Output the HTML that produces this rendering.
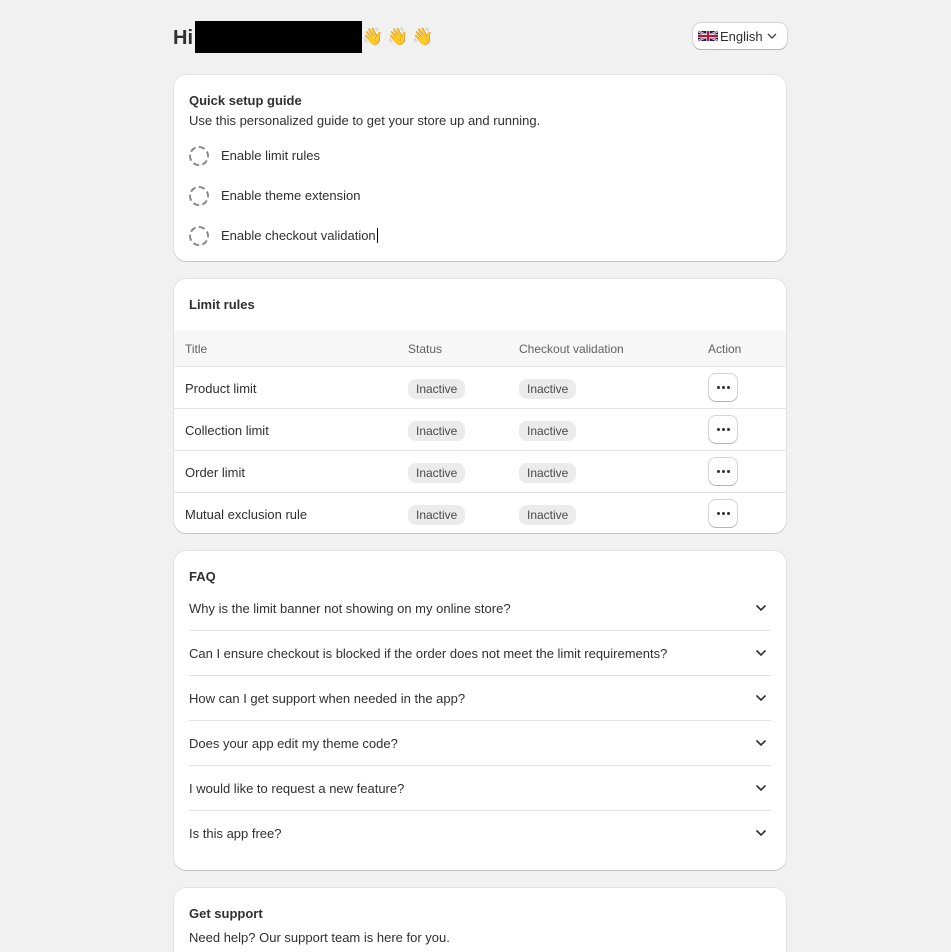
<!DOCTYPE html>
<html><head><style>
*{box-sizing:border-box;margin:0;padding:0}
html,body{width:951px;height:952px;overflow:hidden}
body{background:#f1f1f1;font-family:"Liberation Sans",sans-serif;font-size:13px;color:#303030;position:relative}
.card{position:absolute;left:174px;width:612px;background:#fff;border-radius:12px;box-shadow:0 1px 0 rgba(0,0,0,.12),0 0 0 1px rgba(0,0,0,.06)}
.b{font-weight:bold}
.abs{position:absolute}
.circ{position:absolute;left:15px;width:20px;height:20px;border:2px dashed #8a8a8a;border-radius:50%}
.row{position:absolute;left:0;right:0;height:42px;border-top:1px solid #e3e3e3}
.badge{position:absolute;top:12px;background:#ebebeb;border-radius:8px;padding:3px 8px;font-size:12px;color:#4a4a4a}
.btn{position:absolute;left:535px;top:7px;width:28px;height:27px;border-radius:7px;background:#fff;box-shadow:0 1px 0 #b5b5b5,0 0 0 1px #d4d4d4}
.btn i{position:absolute;top:12px;width:3px;height:3px;border-radius:50%;background:#303030}
.faq{position:absolute;left:15px;right:15px;height:45px;border-bottom:1px solid #e3e3e3}
.faq span{position:absolute;top:15px;left:0}
.faq svg{position:absolute;right:4px;top:18px}
</style></head><body>
<div class="abs b" style="left:173px;top:27px;font-size:20px;color:#303030">Hi</div>
<div class="abs" style="left:195px;top:21px;width:167px;height:32px;background:#000"></div>
<div class="abs" style="left:362px;top:27px;font-size:17px;letter-spacing:4px">👋👋👋</div>
<div class="abs" style="left:693px;top:23px;width:94px;height:26px;background:#fff;border-radius:8px;box-shadow:0 1px 0 #b5b5b5,0 0 0 1px #d4d4d4">
<svg class="abs" style="left:5px;top:6px" width="20" height="14" viewBox="0 0 60 30"><rect width="60" height="30" fill="#012169"/><path d="M0 0L60 30M60 0L0 30" stroke="#fff" stroke-width="6"/><path d="M0 0L60 30M60 0L0 30" stroke="#C8102E" stroke-width="2"/><path d="M30 0V30M0 15H60" stroke="#fff" stroke-width="10"/><path d="M30 0V30M0 15H60" stroke="#C8102E" stroke-width="6"/></svg>
<span class="abs" style="left:27px;top:6px;color:#303030">English</span>
<svg class="abs" style="left:74px;top:9px" width="10" height="8" viewBox="0 0 10 8"><path d="M1 2l4 4 4-4" fill="none" stroke="#4a4a4a" stroke-width="1.4"/></svg>
</div>

<div class="card" style="top:75px;height:186px">
<div class="abs b" style="left:15px;top:18px">Quick setup guide</div>
<div class="abs" style="left:15px;top:38px">Use this personalized guide to get your store up and running.</div>
<div class="circ" style="top:71px"></div><div class="abs" style="left:47px;top:73px">Enable limit rules</div>
<div class="circ" style="top:111px"></div><div class="abs" style="left:47px;top:113px">Enable theme extension</div>
<div class="circ" style="top:151px"></div><div class="abs" style="left:47px;top:153px">Enable checkout validation<span style="border-left:1.5px solid #000;margin-left:1px"></span></div>
</div>

<div class="card" style="top:279px;height:254px;overflow:hidden">
<div class="abs b" style="left:15px;top:18px">Limit rules</div>
<div class="abs" style="left:0;right:0;top:51px;height:37px;background:#f7f7f7;font-size:12px;color:#616161">
<span class="abs" style="left:11px;top:12px">Title</span><span class="abs" style="left:234px;top:12px">Status</span><span class="abs" style="left:345px;top:12px">Checkout validation</span><span class="abs" style="left:534px;top:12px">Action</span></div>
<div class="row" style="top:87px"><span class="abs" style="left:11px;top:14px">Product limit</span><span class="badge" style="left:234px">Inactive</span><span class="badge" style="left:345px">Inactive</span><div class="btn"><i style="left:8px"></i><i style="left:13px"></i><i style="left:18px"></i></div></div>
<div class="row" style="top:129px"><span class="abs" style="left:11px;top:14px">Collection limit</span><span class="badge" style="left:234px">Inactive</span><span class="badge" style="left:345px">Inactive</span><div class="btn"><i style="left:8px"></i><i style="left:13px"></i><i style="left:18px"></i></div></div>
<div class="row" style="top:171px"><span class="abs" style="left:11px;top:14px">Order limit</span><span class="badge" style="left:234px">Inactive</span><span class="badge" style="left:345px">Inactive</span><div class="btn"><i style="left:8px"></i><i style="left:13px"></i><i style="left:18px"></i></div></div>
<div class="row" style="top:213px"><span class="abs" style="left:11px;top:14px">Mutual exclusion rule</span><span class="badge" style="left:234px">Inactive</span><span class="badge" style="left:345px">Inactive</span><div class="btn"><i style="left:8px"></i><i style="left:13px"></i><i style="left:18px"></i></div></div>
</div>

<div class="card" style="top:551px;height:319px">
<div class="abs b" style="left:15px;top:18px">FAQ</div>
<div class="faq" style="top:35px"><span>Why is the limit banner not showing on my online store?</span><svg width="12" height="8" viewBox="0 0 12 8"><path d="M1.5 1.5l4.5 4.5 4.5-4.5" fill="none" stroke="#303030" stroke-width="1.6"/></svg></div>
<div class="faq" style="top:80px"><span>Can I ensure checkout is blocked if the order does not meet the limit requirements?</span><svg width="12" height="8" viewBox="0 0 12 8"><path d="M1.5 1.5l4.5 4.5 4.5-4.5" fill="none" stroke="#303030" stroke-width="1.6"/></svg></div>
<div class="faq" style="top:125px"><span>How can I get support when needed in the app?</span><svg width="12" height="8" viewBox="0 0 12 8"><path d="M1.5 1.5l4.5 4.5 4.5-4.5" fill="none" stroke="#303030" stroke-width="1.6"/></svg></div>
<div class="faq" style="top:170px"><span>Does your app edit my theme code?</span><svg width="12" height="8" viewBox="0 0 12 8"><path d="M1.5 1.5l4.5 4.5 4.5-4.5" fill="none" stroke="#303030" stroke-width="1.6"/></svg></div>
<div class="faq" style="top:215px"><span>I would like to request a new feature?</span><svg width="12" height="8" viewBox="0 0 12 8"><path d="M1.5 1.5l4.5 4.5 4.5-4.5" fill="none" stroke="#303030" stroke-width="1.6"/></svg></div>
<div class="faq" style="top:260px;border-bottom:none"><span>Is this app free?</span><svg width="12" height="8" viewBox="0 0 12 8"><path d="M1.5 1.5l4.5 4.5 4.5-4.5" fill="none" stroke="#303030" stroke-width="1.6"/></svg></div>
</div>

<div class="card" style="top:888px;height:100px">
<div class="abs b" style="left:15px;top:18px">Get support</div>
<div class="abs" style="left:15px;top:42px">Need help? Our support team is here for you.</div>
</div>
</body></html>
